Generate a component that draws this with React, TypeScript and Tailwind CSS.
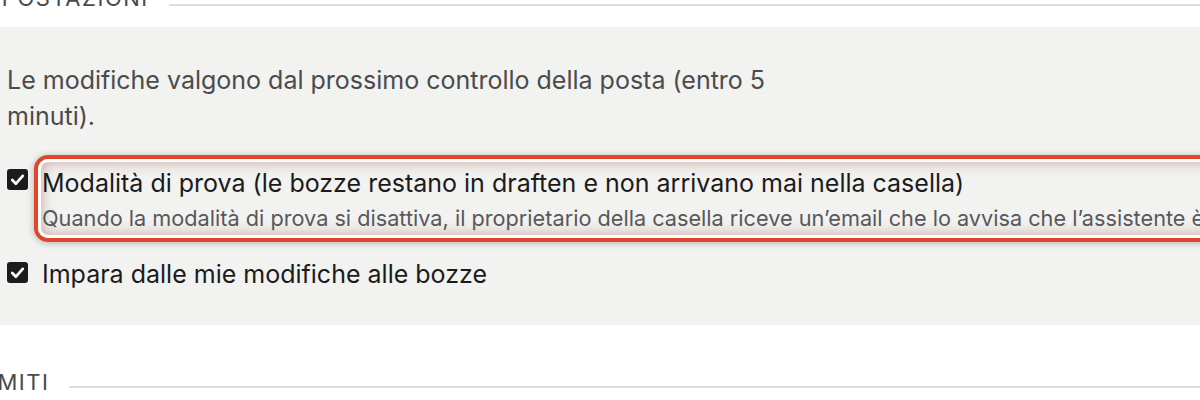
const Check = () => (
  <span className="mt-[var(--cb)] flex h-[21px] w-[21px] shrink-0 items-center justify-center rounded-[3px] bg-[#1c1c1c]">
    <svg viewBox="0 0 20 20" className="h-[21px] w-[21px]">
      <polyline points="5,10.5 8.5,14 15,6.5" fill="none" stroke="#fff" strokeWidth="2.6" strokeLinecap="round" strokeLinejoin="round" />
    </svg>
  </span>
);

const SectionTitle = ({ label, offset, lineGap }: { label: string; offset: string; lineGap: string }) => (
  <div className={`flex items-end gap-[20px] ${offset}`}>
    <span className="text-[22px] leading-none tracking-[0.07em] text-[#48484e]">{label}</span>
    <div className={`h-[2px] flex-1 bg-[#dedede] ${lineGap}`} />
  </div>
);

const App = () => {
  return (
    <div className="h-[400px] w-[1200px] overflow-hidden bg-white font-['Inter',sans-serif]">
      <div className="-mt-[13px]">
        <SectionTitle label="IMPOSTAZIONI" offset="-ml-[27px]" lineGap="mb-[3px]" />
      </div>

      <section className="mt-[18px] bg-[#f2f2f0] pb-[35px] pl-[7px] pt-[35px]">
        <p className="w-[790px] text-[25px] leading-[36px] text-[#4b4b4b]">
          Le modifiche valgono dal prossimo controllo della posta (entro 5 minuti).
        </p>

        <div className="mt-[21px] flex items-start [--cb:14px]">
          <Check />
          <div className="ml-[6px] rounded-[14px] border-4 border-[#e0462b] shadow-[0_1px_7px_rgba(0,0,0,0.28)]">
            <div className="rounded-[10px] border-[3px] border-white pb-[3px] pl-px pr-4 pt-[5px] shadow-[inset_0_0_14px_rgba(140,70,60,0.45)]">
              <div className="text-[25px] leading-[32px] text-[#1b1b1b]">
                Modalità di prova (le bozze restano in draften e non arrivano mai nella casella)
              </div>
              <div className="mt-[5px] whitespace-nowrap text-[21.7px] leading-[28px] text-[#58585a]">
                Quando la modalità di prova si disattiva, il proprietario della casella riceve un’email che lo avvisa che l’assistente è di nuovo attivo.
              </div>
            </div>
          </div>
        </div>

        <div className="mt-[16px] flex items-start [--cb:4px]">
          <Check />
          <span className="ml-[14px] text-[25px] leading-[32px] text-[#1b1b1b]">
            Impara dalle mie modifiche alle bozze
          </span>
        </div>
      </section>

      <div className="mt-[46px]">
        <SectionTitle label="LIMITI" offset="-ml-[24px]" lineGap="mb-[5px]" />
      </div>
    </div>
  );
};

export default App;
